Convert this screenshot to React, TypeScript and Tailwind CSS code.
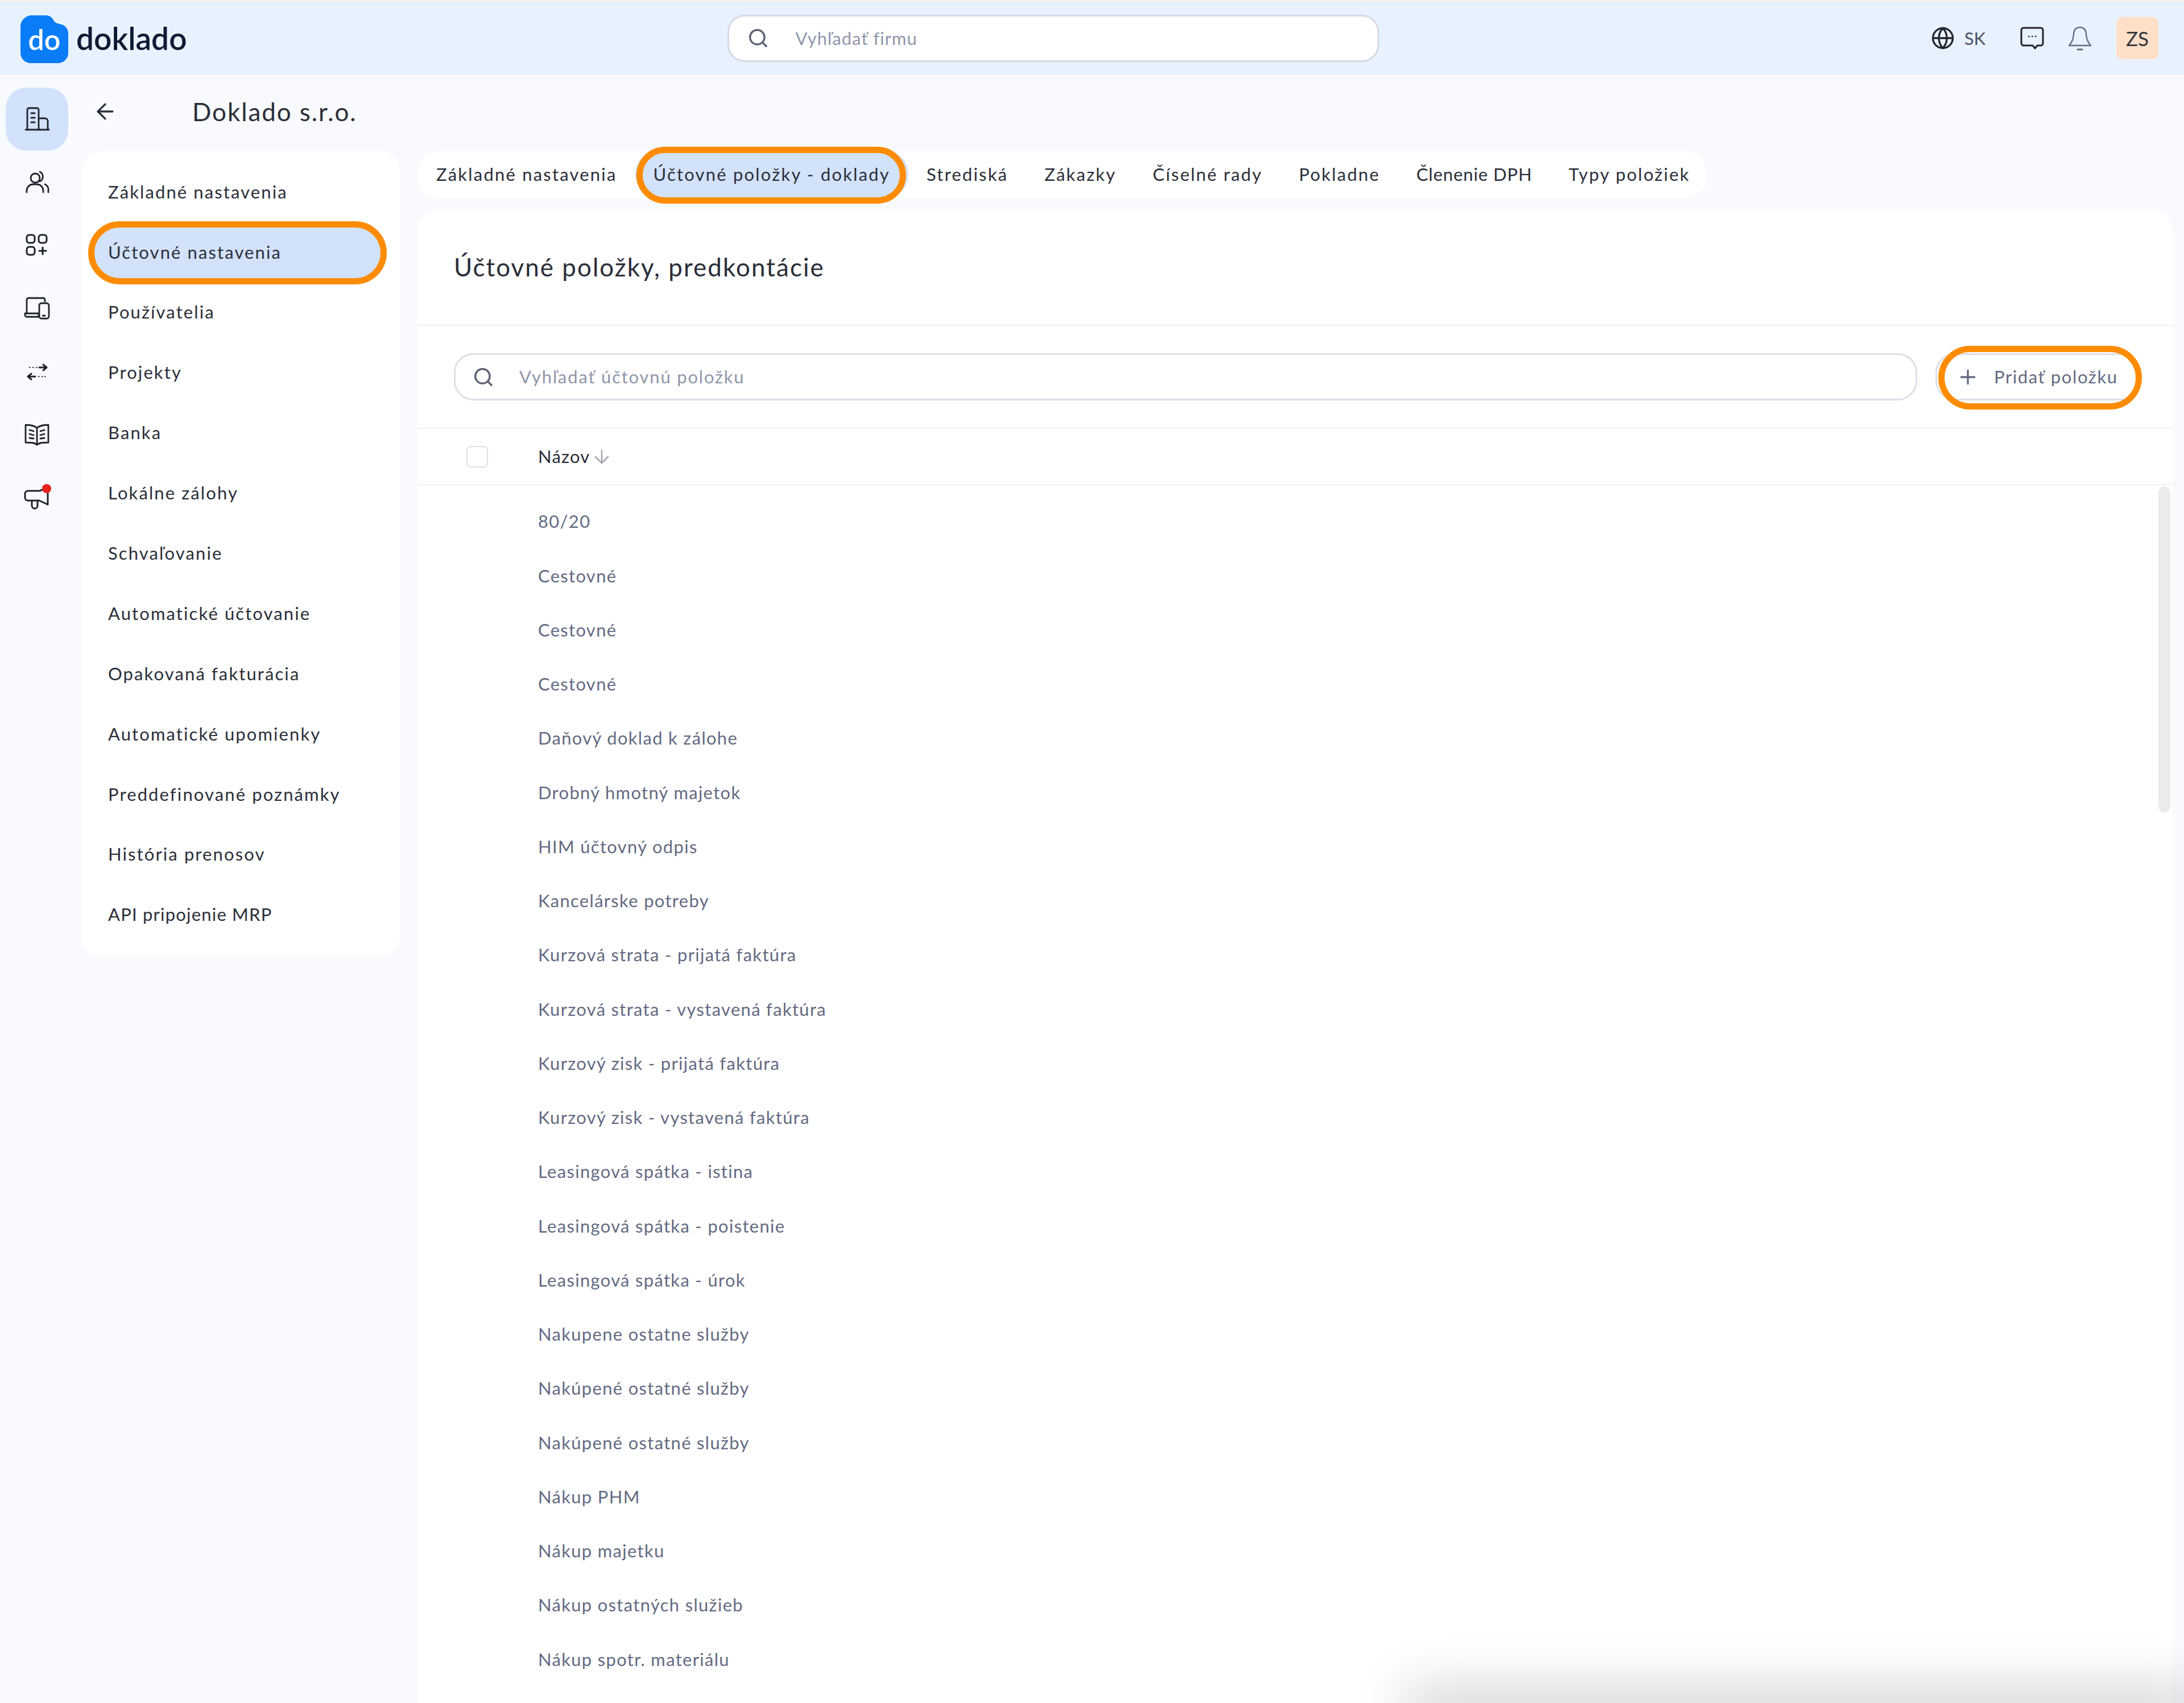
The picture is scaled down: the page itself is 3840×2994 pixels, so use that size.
import { ArrowDown, ArrowLeft, Globe, Plus, Search } from "lucide-react";

const navItems = [
  "Základné nastavenia",
  "Účtovné nastavenia",
  "Používatelia",
  "Projekty",
  "Banka",
  "Lokálne zálohy",
  "Schvaľovanie",
  "Automatické účtovanie",
  "Opakovaná fakturácia",
  "Automatické upomienky",
  "Preddefinované poznámky",
  "História prenosov",
  "API pripojenie MRP",
];

const tabs = [
  "Základné nastavenia",
  "Účtovné položky - doklady",
  "Strediská",
  "Zákazky",
  "Číselné rady",
  "Pokladne",
  "Členenie DPH",
  "Typy položiek",
];

const rows = [
  "80/20",
  "Cestovné",
  "Cestovné",
  "Cestovné",
  "Daňový doklad k zálohe",
  "Drobný hmotný majetok",
  "HIM účtovný odpis",
  "Kancelárske potreby",
  "Kurzová strata - prijatá faktúra",
  "Kurzová strata - vystavená faktúra",
  "Kurzový zisk - prijatá faktúra",
  "Kurzový zisk - vystavená faktúra",
  "Leasingová spátka - istina",
  "Leasingová spátka - poistenie",
  "Leasingová spátka - úrok",
  "Nakupene ostatne služby",
  "Nakúpené ostatné služby",
  "Nakúpené ostatné služby",
  "Nákup PHM",
  "Nákup majetku",
  "Nákup ostatných služieb",
  "Nákup spotr. materiálu",
];

function RailIcon({ children }: { children: React.ReactNode }) {
  return (
    <svg width="48" height="48" viewBox="0 0 48 48" fill="none" stroke="#1f2228" strokeWidth="2.8" strokeLinecap="round" strokeLinejoin="round">
      {children}
    </svg>
  );
}

const railIcons = [
  <RailIcon key="firm">
    <path d="M7 43V8a3 3 0 0 1 3-3h14a3 3 0 0 1 3 3v35" />
    <path d="M27 23h11a5 5 0 0 1 5 5v15" />
    <path d="M4 43h41" />
    <path d="M14 14h6M14 22h6M14 30h6" strokeWidth="3" />
  </RailIcon>,
  <RailIcon key="users">
    <circle cx="21" cy="17" r="8" />
    <path d="M6 42v-3a11 11 0 0 1 11-11h7a11 11 0 0 1 11 11v3" />
    <path d="M29 6a9 9 0 0 1 5 11 9 9 0 0 1-5 6" />
    <path d="M38 28a10 10 0 0 1 6 11v3" />
  </RailIcon>,
  <RailIcon key="apps">
    <rect x="6" y="6" width="14" height="14" rx="4.5" strokeWidth="3" />
    <rect x="27" y="6" width="14" height="14" rx="4.5" strokeWidth="3" />
    <rect x="6" y="27" width="14" height="14" rx="4.5" strokeWidth="3" />
    <path d="M34 28v12M28 34h12" strokeWidth="3.2" />
  </RailIcon>,
  <RailIcon key="devices">
    <path d="M6 32V9a3 3 0 0 1 3-3h26a3 3 0 0 1 3 3v3" />
    <path d="M3 33h24v6H6a3 3 0 0 1-3-3z" />
    <rect x="28" y="15" width="17" height="27" rx="4" />
    <path d="M34 37h4" />
  </RailIcon>,
  <RailIcon key="transfer">
    <path d="M41 17H28M35 12l6 5-6 5" strokeWidth="3" />
    <path d="M8 33h13M14 28l-6 5 6 5" strokeWidth="3" />
    <path d="M11 17h.5M17 17h.5M23 17h.5M27 33h.5M33 33h.5M38 33h.5" strokeWidth="2.2" />
  </RailIcon>,
  <RailIcon key="book">
    <path d="M24 13c-4-3-11-5-20-5v31c9 0 16 0 20 4 4-4 11-4 20-4V8c-9 0-16 2-20 5z" />
    <path d="M24 13v30" />
    <path d="M11 17l7 2M11 24l7 2M11 31l7 1M30 19l7-2M30 26l7-2M30 32l7-1" />
  </RailIcon>,
  <RailIcon key="promo">
    <path d="M28 13H8a5 5 0 0 0-5 5v7a5 5 0 0 0 5 5h20l15 7V8z" strokeWidth="3" />
    <path d="M15 30v9a5 5 0 0 0 10 0v-9" strokeWidth="3" />
  </RailIcon>,
];

export default function App() {
  return (
    <div className="relative flex h-[2994px] w-[3840px] flex-col overflow-hidden bg-[#f8fafd] font-[Lato,sans-serif] text-[31px] text-[#2a2e38]">
      <div className="h-[3px] bg-[#f5f2ed]" />

      {/* top bar */}
      <header className="relative flex h-[128px] items-center bg-[#e8f2fe]">
        <div className="relative ml-[36px] mt-[4px] flex h-[84px] w-[84px] items-center justify-center">
          <svg className="absolute inset-0" width="84" height="84" viewBox="0 0 84 84">
            <path fill="#0a7cf8" d="M20 0h24c7 0 11 3 14 8 2 4 5 6 10 7 10 1 16 8 16 17v34c0 10-8 18-18 18H18C8 84 0 76 0 66V20C0 9 9 0 20 0z" />
          </svg>
          <span className="relative text-[50px] font-semibold leading-none text-white">do</span>
        </div>
        <span className="ml-[14px] text-[55px] font-semibold leading-none text-[#0f1a33]">doklado</span>

        <div className="ml-[950px] flex h-[83px] w-[1146px] items-center rounded-[30px] border-[3px] border-[#d5d9e2] bg-white pl-[32px]">
          <Search size={38} strokeWidth={2.2} color="#5c6277" />
          <span className="ml-[47px] text-[31px] tracking-[1px] text-[#8f96aa]">Vyhľadať firmu</span>
        </div>

        <div className="ml-auto flex items-center pr-[45px]">
          <Globe size={42} strokeWidth={1.9} color="#23262d" />
          <span className="ml-[17px] text-[31px] text-[#4c5164]">SK</span>
          <svg className="ml-[60px]" width="44" height="44" viewBox="0 0 44 44" fill="none" stroke="#1f2228" strokeWidth="3" strokeLinecap="round" strokeLinejoin="round">
            <path d="M7 4h30a4 4 0 0 1 4 4v23a4 4 0 0 1-4 4h-6l-4 5-4-5H7a4 4 0 0 1-4-4V8a4 4 0 0 1 4-4z" />
            <path d="M16 19h.5M22 19h.5M28 19h.5" strokeWidth="2.4" />
          </svg>
          <svg className="ml-[40px]" width="44" height="44" viewBox="0 0 44 44" fill="none" stroke="#646b82" strokeWidth="2.4" strokeLinecap="round" strokeLinejoin="round">
            <path d="M22 3c-7 0-11 5-11 12 0 8-3 14-8 20h38c-5-6-8-12-8-20 0-7-4-12-11-12z" />
            <path d="M18 42h8" strokeWidth="3" />
          </svg>
          <div className="ml-[42px] flex h-[74px] w-[74px] items-center justify-center rounded-[10px] bg-[#ffdfc8] text-[35px] text-[#33343a]">ZS</div>
        </div>
      </header>

      <div className="flex min-h-0 flex-1">
        {/* icon rail */}
        <aside className="flex w-[143px] shrink-0 flex-col pl-[10px] pr-[23px] pt-[23px]">
          {railIcons.map((icon, i) => (
            <div key={i} className={`relative flex h-[110.8px] w-[110px] shrink-0 items-center justify-center rounded-[36px] ${i === 0 ? "bg-[#d3e2fb]" : ""}`}>
              {icon}
              {i === 6 && <span className="absolute left-[64px] top-[32px] h-[16px] w-[16px] rounded-full bg-[#e5231f]" />}
            </div>
          ))}
        </aside>

        {/* settings navigation */}
        <div className="flex w-[560px] shrink-0 flex-col">
          <div className="flex h-[134px] items-center pb-[4px]">
            <ArrowLeft className="ml-[20px]" size={44} strokeWidth={1.8} color="#2a2e38" />
            <h1 className="ml-[131px] whitespace-nowrap text-[44px] font-normal tracking-[1.9px] text-[#2a2e38]">Doklado s.r.o.</h1>
          </div>
          <nav className="rounded-[36px] bg-white pb-[21px] pl-[17px] pr-[23px] pt-[19px]">
            {navItems.map((item, i) => (
              <div key={item} className={`relative flex h-[105.9px] items-center rounded-full pl-[30px] ${i === 12 ? "tracking-[1.2px]" : "tracking-[2.1px]"} ${i === 1 ? "bg-[#d3e2fb]" : ""}`}>
                {item}
                {i === 1 && <span className="absolute -bottom-[4px] -left-[5px] -top-[1px] right-0 rounded-full border-[11px] border-[#ff8c00]" />}
              </div>
            ))}
          </nav>
        </div>

        {/* main column */}
        <main className="ml-[31px] flex min-w-0 flex-1 flex-col pr-[20px] pt-[134px]">
          <div className="flex h-[83px] w-[2266px] items-center rounded-[36px] bg-white px-px">
            {tabs.map((tab, i) => (
              <div key={tab} className={`relative flex h-[83px] items-center whitespace-nowrap rounded-[40px] px-[32px] ${i === 6 ? "tracking-[0.9px]" : "tracking-[2.2px]"} ${i === 1 ? "bg-[#d3e2fb]" : ""}`}>
                {tab}
                {i === 1 && <span className="absolute -bottom-[10px] -top-[7px] left-[2px] right-[4px] rounded-full border-[11px] border-[#ff8c00]" />}
              </div>
            ))}
          </div>

          <section className="relative mt-[22px] flex min-h-0 flex-1 flex-col overflow-hidden rounded-t-[36px] bg-white">
            <div className="flex h-[203px] shrink-0 items-center border-b-2 border-[#eff0f3] pb-[3px] pl-[64px]">
              <h2 className="text-[44px] font-normal tracking-[2px] text-[#2a2e38]">Účtovné položky, predkontácie</h2>
            </div>

            <div className="flex h-[181px] shrink-0 items-center border-b-2 border-[#eff0f3] pl-[64px] pr-[57px]">
              <div className="flex h-[83px] flex-1 items-center rounded-[34px] border-[3px] border-[#dcdfe5] pl-[30px]">
                <Search size={38} strokeWidth={2.2} color="#5c6277" />
                <span className="ml-[44px] tracking-[1.8px] text-[#8f96aa]">Vyhľadať účtovnú položku</span>
              </div>
              <div className="relative ml-[32px] flex h-[83px] w-[360px] items-center rounded-[34px] border-[3px] border-[#dcdfe5] bg-white pl-[34px] tracking-[1.6px] text-[#636a82]">
                <Plus size={40} strokeWidth={2} color="#636a82" />
                <span className="ml-[26px] whitespace-nowrap">Pridať položku</span>
                <span className="absolute -bottom-[19px] -right-[6px] -top-[16px] left-[2px] rounded-full border-[11px] border-[#ff8c00]" />
              </div>
            </div>

            <div className="flex h-[99px] shrink-0 items-center border-b-2 border-[#eff0f3] pl-[86px]">
              <div className="h-[38px] w-[38px] rounded-[8px] border-2 border-[#dfe1e7]" />
              <span className="ml-[88px] tracking-[1.2px] text-[#2a2e38]">Názov</span>
              <ArrowDown className="ml-[2px]" size={38} strokeWidth={1.6} color="#a3a6ad" />
            </div>

            <div className="pt-[16px]">
              {rows.map((row, i) => (
                <div key={i} className="flex h-[95.25px] items-center pl-[212px] tracking-[1.3px] text-[#636a82]">{row}</div>
              ))}
            </div>

            <div className="absolute right-[4px] top-[485px] h-[573px] w-[21px] rounded-full bg-[#eaebed]" />
          </section>
        </main>
      </div>

      {/* soft shadow of a bar lying below the fold */}
      <div className="absolute -bottom-[30px] left-[2500px] right-0 h-[30px] shadow-[0_0_90px_30px_rgba(0,0,0,0.16)]" />
    </div>
  );
}
